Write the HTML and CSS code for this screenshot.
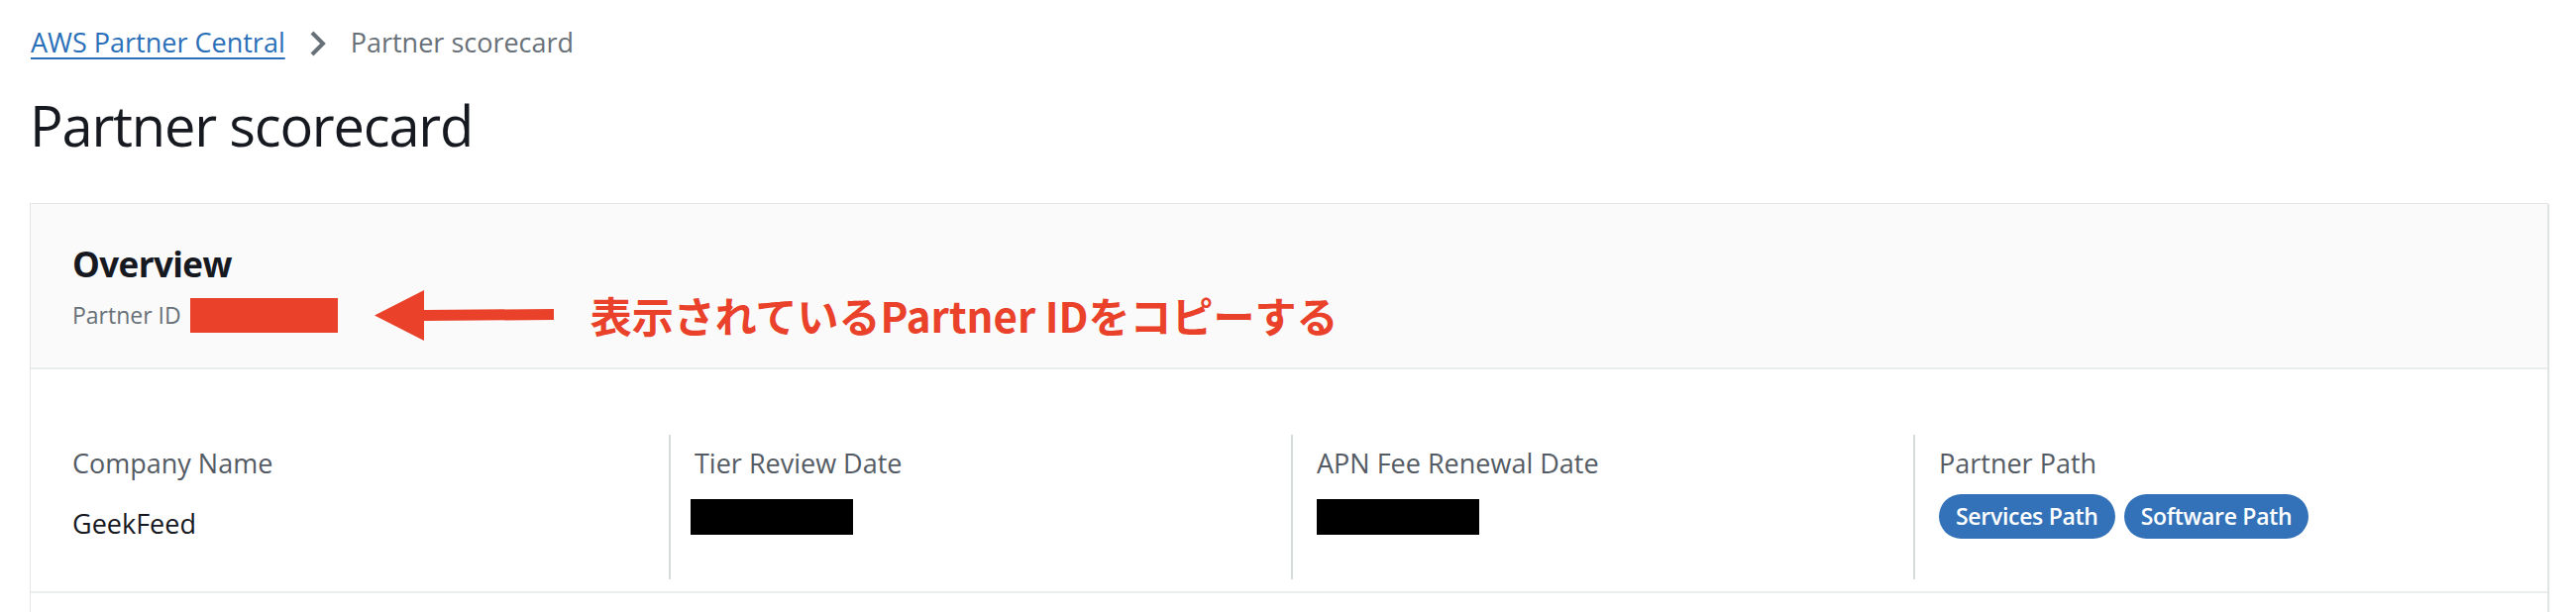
FILE: index.html
```html
<!DOCTYPE html>
<html lang="ja">
<head>
  <meta charset="UTF-8">
  <title>Partner scorecard</title>
  <link rel="stylesheet" href="styles.css">
</head>
<body>
  <div class="page">
    <nav class="breadcrumbs">
      <a href="#" class="crumb-link">AWS Partner Central</a>
      <svg class="crumb-sep" width="18" height="26" viewBox="0 0 18 26">
        <path d="M3 2 L14 13 L3 24" fill="none" stroke="#687078" stroke-width="4" stroke-linejoin="miter"/>
      </svg>
      <span class="crumb-current">Partner scorecard</span>
    </nav>

    <h1 class="page-title">Partner scorecard</h1>

    <section class="container">
      <header class="container-header">
        <h2>Overview</h2>
        <div class="partner-id">
          <span class="pid-label">Partner ID</span>
          <span class="redact red"></span>
          <svg class="note-arrow" width="181" height="51" viewBox="0 0 181 51">
            <polygon points="0,25.5 50,0 50,20 181,19 181,30 50,31 50,51" fill="#e9412a"/>
          </svg>
          <span class="note">表示されているPartner IDをコピーする</span>
        </div>
      </header>

      <div class="columns">
        <div class="col">
          <div class="col-label">Company Name</div>
          <div class="col-value text">GeekFeed</div>
        </div>
        <div class="col">
          <div class="col-label">Tier Review Date</div>
          <div class="col-value"><span class="redact black shifted"></span></div>
        </div>
        <div class="col">
          <div class="col-label">APN Fee Renewal Date</div>
          <div class="col-value"><span class="redact black"></span></div>
        </div>
        <div class="col">
          <div class="col-label">Partner Path</div>
          <div class="col-value badges">
            <span class="badge">Services Path</span>
            <span class="badge">Software Path</span>
          </div>
        </div>
      </div>

      <div class="container-rest"></div>
    </section>
  </div>
</body>
</html>
```

FILE: styles.css
```css
body {
  margin: 0;
  background: #fff;
  color: #16191f;
  font-family: "Open Sans", "Noto Sans", sans-serif;
}
.page {
  padding: 23px 28px 0 30px;
}

/* breadcrumbs */
.breadcrumbs {
  display: flex;
  align-items: center;
  height: 40px;
  font-size: 27px;
  line-height: 40px;
}
.crumb-link {
  color: #2a6fb8;
  text-decoration: underline;
  text-decoration-thickness: 2px;
  text-underline-offset: 5px;
  margin-left: 1px;
}
.crumb-sep { margin: 2px 24px 0 24px; }
.crumb-current { color: #687078; }

.page-title {
  margin: 27px 0 43px 0;
  font-size: 56px;
  line-height: 72px;
  font-weight: 400;
  letter-spacing: -1.2px;
}

/* container */
.container {
  border: 1px solid #e4e7e7;
  box-shadow: 1px 1px 1px rgba(0, 28, 36, 0.12);
  background: #fff;
}
.container-header {
  background: #fafafa;
  border-bottom: 2px solid #eaeded;
  padding: 37px 42px 35px 42px;
}
.container-header h2 {
  margin: 0;
  font-size: 35px;
  line-height: 48px;
  font-weight: 700;
  letter-spacing: -0.6px;
}
.partner-id {
  display: flex;
  align-items: center;
  height: 36px;
  margin-top: 9px;
}
.pid-label {
  color: #687078;
  font-size: 23px;
}
.redact { display: inline-block; }
.redact.red {
  background: #e9412a;
  width: 149px;
  height: 35px;
  margin-left: 9px;
}
.redact.black {
  background: #000;
  width: 164px;
  height: 36px;
}
.redact.shifted { margin-left: -4px; }
.note-arrow { margin-left: 37px; }
.note {
  margin-left: 37px;
  color: #e9412a;
  font-family: "Noto Sans CJK JP", sans-serif;
  font-weight: 700;
  font-size: 42px;
  line-height: 36px;
}

/* key/value columns */
.columns {
  display: grid;
  grid-template-columns: repeat(4, 1fr);
  padding: 66px 12px 12px 16px;
  border-bottom: 2px solid #eaeded;
}
.col {
  padding: 9px 0 0 26px;
  height: 137px;
}
.col + .col {
  border-left: 2px solid #d5dbdb;
  padding-left: 24px;
}
.col-label {
  color: #545b64;
  font-size: 27px;
  line-height: 40px;
}
.col-value {
  display: flex;
  align-items: center;
  margin-top: 11px;
  height: 45px;
  font-size: 27px;
}
.col-value.text {
  align-items: flex-start;
  padding-top: 11px;
}
.badges { gap: 9px; }
.badge {
  background: #3372b8;
  color: #fff;
  font-size: 23px;
  font-weight: 600;
  letter-spacing: -0.3px;
  height: 45px;
  line-height: 45px;
  padding: 0 17px;
  border-radius: 23px;
}
.container-rest {
  height: 40px;
}
```
